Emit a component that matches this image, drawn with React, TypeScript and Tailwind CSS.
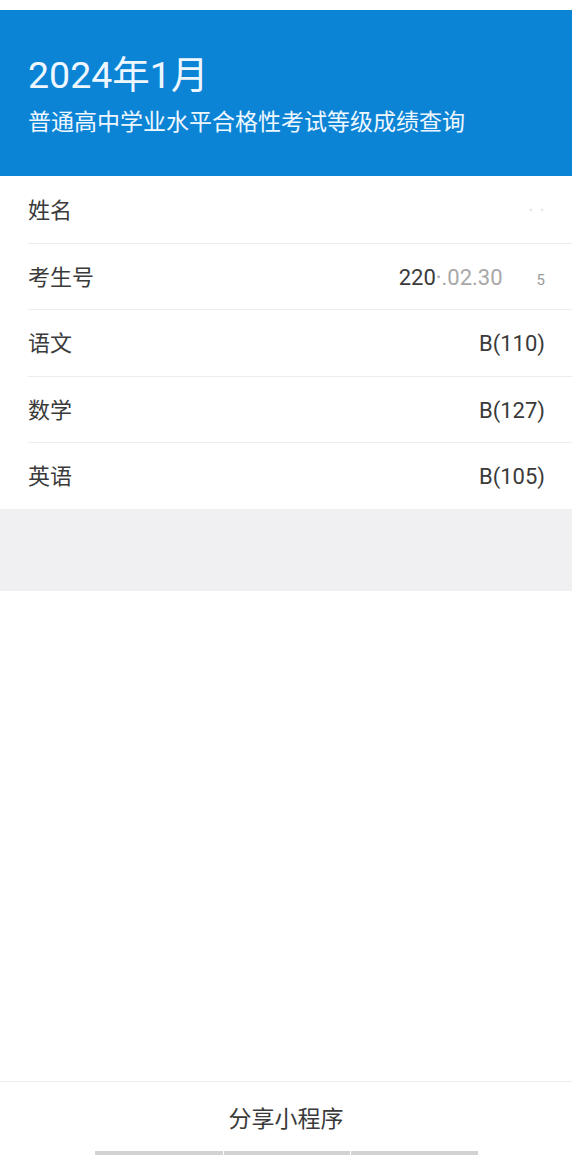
const FONT = "font-['Roboto','Noto_Sans_CJK_SC',sans-serif]";

type Row = { label: string; value: React.ReactNode };

const rows: Row[] = [
  { label: "姓名", value: <span className="text-[#e6e6e6]">· ·</span> },
  {
    label: "考生号",
    value: (
      <span className="flex items-baseline">
        <span>220</span>
        <span className="text-[#a8a8a8]">·.02.30</span>
        <span className="w-[34px]" />
        <span className="text-[#9a9a9a] text-[15px]">5</span>
      </span>
    ),
  },
  { label: "语文", value: "B(110)" },
  { label: "数学", value: "B(127)" },
  { label: "英语", value: "B(105)" },
];

export default function App() {
  return (
    <div className={`flex h-[1155px] w-[572px] flex-col overflow-hidden bg-white ${FONT}`}>
      <div className="h-[10px] shrink-0 bg-white" />
      <header className="flex h-[166px] shrink-0 flex-col bg-[#0c84d6] px-[28px] pt-[41px] text-[#eef7ff]">
        <h1 className="text-[37.5px] leading-[48px]">2024年1月</h1>
        <p className="mt-[9px] text-[23px] leading-[30px]">普通高中学业水平合格性考试等级成绩查询</p>
      </header>

      <div className="flex shrink-0 flex-col">
        {rows.map((r, i) => (
          <div
            key={r.label}
            className={`ml-[28px] flex h-[66.5px] items-center justify-between pt-[2px] pr-[27px] text-[22px] text-[#3a3a3a] ${
              i > 0 ? "border-t border-[#ececec]" : ""
            }`}
          >
            <span>{r.label}</span>
            <span>{r.value}</span>
          </div>
        ))}
      </div>

      <div className="h-[82px] shrink-0 bg-[#f0f0f2]" />

      <div className="flex-1" />

      <footer className="flex h-[74px] shrink-0 flex-col border-t border-[#ececec]">
        <div className="flex flex-1 items-center justify-center pt-[8px] text-[23px] text-[#3a3a3a]">
          分享小程序
        </div>
        <div className="mx-auto flex h-[4px] w-[383px] gap-[1px]">
          <div className="w-[128px] bg-[#d2d2d2]" />
          <div className="w-[126px] bg-[#d2d2d2]" />
          <div className="flex-1 bg-[#d2d2d2]" />
        </div>
      </footer>
    </div>
  );
}
